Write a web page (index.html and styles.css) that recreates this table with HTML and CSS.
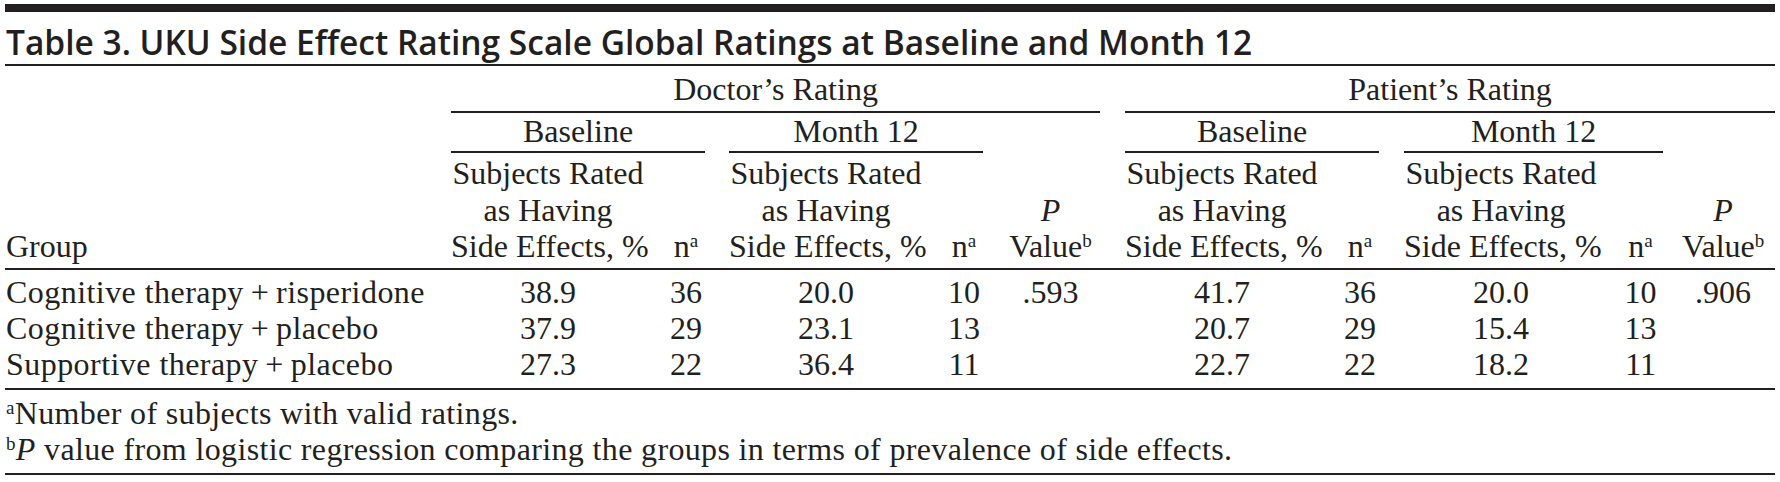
FILE: index.html
```html
<!DOCTYPE html>
<html lang="en">
<head>
<meta charset="utf-8">
<title>Table 3. UKU Side Effect Rating Scale Global Ratings</title>
<link rel="stylesheet" href="styles.css">
</head>
<body>
<div class="page">
  <div class="topbar"></div>
  <h1 class="title">Table 3. UKU Side Effect Rating Scale Global Ratings at Baseline and Month 12</h1>
  <table class="tbl">
    <colgroup>
      <col class="c-grp">
      <col class="c-subj"><col class="c-n"><col class="c-gap1">
      <col class="c-subj"><col class="c-n"><col class="c-p1">
      <col class="c-gap2">
      <col class="c-subj"><col class="c-n"><col class="c-gap2">
      <col class="c-subj"><col class="c-n2"><col class="c-p2">
    </colgroup>
    <thead>
      <tr class="row-a">
        <th rowspan="3" class="grp-h">Group</th>
        <th colspan="6" class="spanner">Doctor’s Rating</th>
        <th></th>
        <th colspan="6" class="spanner">Patient’s Rating</th>
      </tr>
      <tr class="row-b">
        <th colspan="2" class="spanner">Baseline</th>
        <th></th>
        <th colspan="2" class="spanner">Month 12</th>
        <th></th>
        <th></th>
        <th colspan="2" class="spanner">Baseline</th>
        <th></th>
        <th colspan="2" class="spanner">Month 12</th>
        <th></th>
      </tr>
      <tr class="row-c">
        <th class="subj-h">Subjects Rated<br>as Having<br>Side Effects, %</th>
        <th class="n">n<sup>a</sup></th>
        <th></th>
        <th class="subj-h">Subjects Rated<br>as Having<br>Side Effects, %</th>
        <th class="n">n<sup>a</sup></th>
        <th class="p"><i>P</i><br>Value<sup>b</sup></th>
        <th></th>
        <th class="subj-h">Subjects Rated<br>as Having<br>Side Effects, %</th>
        <th class="n">n<sup>a</sup></th>
        <th></th>
        <th class="subj-h">Subjects Rated<br>as Having<br>Side Effects, %</th>
        <th class="n n2">n<sup>a</sup></th>
        <th class="p p2"><i>P</i><br>Value<sup>b</sup></th>
      </tr>
    </thead>
    <tbody>
      <tr class="first">
        <td class="grp">Cognitive therapy&thinsp;+&thinsp;risperidone</td>
        <td class="num">38.9</td><td class="n">36</td><td></td>
        <td class="num">20.0</td><td class="n">10</td><td class="p">.593</td><td></td>
        <td class="num">41.7</td><td class="n">36</td><td></td>
        <td class="num">20.0</td><td class="n n2">10</td><td class="p p2">.906</td>
      </tr>
      <tr>
        <td class="grp">Cognitive therapy&thinsp;+&thinsp;placebo</td>
        <td class="num">37.9</td><td class="n">29</td><td></td>
        <td class="num">23.1</td><td class="n">13</td><td class="p"></td><td></td>
        <td class="num">20.7</td><td class="n">29</td><td></td>
        <td class="num">15.4</td><td class="n n2">13</td><td class="p p2"></td>
      </tr>
      <tr class="last">
        <td class="grp">Supportive therapy&thinsp;+&thinsp;placebo</td>
        <td class="num">27.3</td><td class="n">22</td><td></td>
        <td class="num">36.4</td><td class="n">11</td><td class="p"></td><td></td>
        <td class="num">22.7</td><td class="n">22</td><td></td>
        <td class="num">18.2</td><td class="n n2">11</td><td class="p p2"></td>
      </tr>
    </tbody>
  </table>
  <div class="notes">
    <p><sup>a</sup>Number of subjects with valid ratings.</p>
    <p><sup>b</sup><i>P</i> value from logistic regression comparing the groups in terms of prevalence of side effects.</p>
  </div>
</div>
</body>
</html>
```
FILE: styles.css
```css
html, body {
  margin: 0;
  padding: 0;
  background: #ffffff;
}

.page {
  width: 1770px;
  margin-left: 5px;
  color: #231f20;
  font-family: "Liberation Serif", "Times New Roman", serif;
  font-size: 32px;
}

.topbar {
  margin-top: 4px;
  height: 8px;
  background: #231f20;
}

.title {
  margin: 0;
  padding: 8px 0 0 1px;
  height: 44px;
  line-height: 44px;
  font-family: "Open Sans", "Noto Sans", sans-serif;
  font-weight: 600;
  font-size: 33.5px;
  letter-spacing: 0;
  white-space: nowrap;
  border-bottom: 2px solid #231f20;
}

.tbl {
  width: 1770px;
  table-layout: fixed;
  border-collapse: separate;
  border-spacing: 0;
  line-height: 36px;
}

.c-grp { width: 446px; }
.c-subj { width: 194px; }
.c-n { width: 60px; }
.c-n2 { width: 65px; }
.c-gap1 { width: 24px; }
.c-gap2 { width: 25px; }
.c-p1 { width: 117px; }
.c-p2 { width: 112px; }

.tbl th,
.tbl td {
  padding: 0;
  font-weight: normal;
  text-align: center;
  white-space: nowrap;
  vertical-align: bottom;
}

.row-a th {
  padding-top: 5px;
  padding-bottom: 4px;
}

.row-b th {
  padding-top: 0;
  padding-bottom: 2px;
}

.spanner {
  border-bottom: 2px solid #231f20;
}

.row-c th {
  line-height: 36.5px;
  padding-top: 2px;
  padding-bottom: 3.5px;
  border-bottom: 2px solid #231f20;
}

.tbl .grp-h {
  text-align: left;
  padding-left: 1px;
  padding-bottom: 3.5px;
  line-height: 36.5px;
  border-bottom: 2px solid #231f20;
}

.tbl .subj-h {
  text-align: center;
}

.tbl .n {
  padding-left: 22px;
}

.tbl .n2 {
  padding-left: 20px;
}

.tbl .p {
  padding-left: 18px;
}

.tbl .p2 {
  padding-left: 8px;
}

.tbl td.grp {
  text-align: left;
  padding-left: 1px;
  letter-spacing: 0.45px;
}

.tbl tbody tr.first td {
  padding-top: 4px;
}

.tbl tbody tr.last td {
  padding-bottom: 6px;
  border-bottom: 2px solid #231f20;
}

sup {
  font-size: 19px;
  line-height: 0;
  vertical-align: 10px;
}

.notes {
  padding: 5px 0 6px 1px;
  line-height: 36px;
  letter-spacing: 0.35px;
  border-bottom: 2px solid #231f20;
}

.notes p {
  margin: 0;
  white-space: nowrap;
}
```
